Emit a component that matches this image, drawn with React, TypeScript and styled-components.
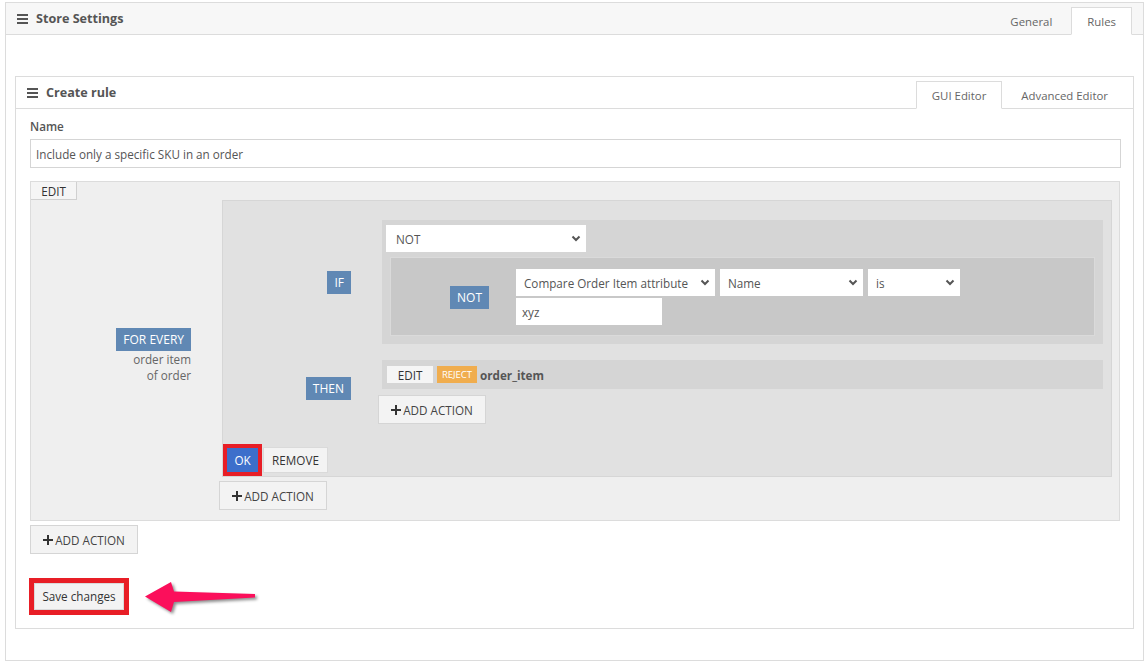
import React from "react";
import styled, { createGlobalStyle } from "styled-components";

const GlobalStyle = createGlobalStyle`
  html, body { margin: 0; padding: 0; background: #fff; }
  body {
    font-family: "Open Sans", "Noto Sans", Arial, sans-serif;
    font-size: 11.7px;
    color: #555;
  }
  * { box-sizing: border-box; }
`;

const Page = styled.div`
  width: 1148px;
  padding: 2px 4px 0 5px;
`;

const Panel = styled.section<{ $height?: number }>`
  border: 1px solid #dcdcdc;
  background: #fff;
  display: flex;
  flex-direction: column;
  ${(p) => (p.$height ? `height: ${p.$height}px; overflow: hidden;` : "")}
`;

const PanelHeader = styled.header<{ $bg: string; $right: number }>`
  flex: none;
  height: 32px;
  background: ${(p) => p.$bg};
  border-bottom: 1px solid #dcdcdc;
  display: flex;
  align-items: stretch;
  justify-content: space-between;
  padding: 0 ${(p) => p.$right}px 0 11px;
`;

const Title = styled.h2`
  margin: 0;
  display: flex;
  align-items: center;
  gap: 8px;
  font-size: 12.6px;
  font-weight: 700;
  color: #555;
`;

const Tabs = styled.nav`
  align-self: flex-end;
  display: flex;
  gap: 3px;
  margin-bottom: -1px;
`;

const Tab = styled.div<{ $active?: boolean }>`
  height: 28px;
  padding: 0 15px;
  display: flex;
  align-items: center;
  font-size: 11.4px;
  color: #666;
  border: 1px solid ${(p) => (p.$active ? "#dcdcdc" : "transparent")};
  border-bottom-color: ${(p) => (p.$active ? "#fff" : "transparent")};
  background: ${(p) => (p.$active ? "#fff" : "transparent")};
`;

const OuterBody = styled.div`
  padding: 41px 9px 0 9px;
`;

const InnerBody = styled.div`
  padding: 9px 12px 10px 14px;
  display: flex;
  flex-direction: column;
  align-items: flex-start;
`;

const FieldLabel = styled.label`
  display: block;
  font-weight: 600;
  line-height: 17px;
  margin-bottom: 4px;
  color: #555;
`;

const TextInput = styled.input<{ $width?: string }>`
  display: block;
  width: ${(p) => p.$width || "100%"};
  height: 29px;
  border: 1px solid #d5d5d5;
  padding: 0 5px;
  font: inherit;
  color: #555;
  background: #fff;
  outline: none;
`;

const RuleBox = styled.div`
  align-self: stretch;
  margin: 13px 1px 0 0;
  border: 1px solid #dcdcdc;
  background: #efefef;
  padding: 0 7px 10px 0;
`;

const CornerEdit = styled.div`
  width: 46px;
  height: 18px;
  background: #f5f5f5;
  border-right: 1px solid #d0d0d0;
  border-bottom: 1px solid #d0d0d0;
  display: flex;
  align-items: center;
  justify-content: center;
  color: #333;
`;

const LoopRow = styled.div`
  display: grid;
  grid-template-columns: 191px 1fr;
  align-items: center;
`;

const LoopLabel = styled.div`
  display: flex;
  flex-direction: column;
  align-items: flex-end;
  padding-right: 31px;
  text-align: right;
`;

const LoopText = styled.div`
  line-height: 16px;
  color: #666;
`;

const LoopContent = styled.div`
  display: flex;
  flex-direction: column;
  align-items: flex-start;
`;

const Badge = styled.span`
  display: inline-flex;
  align-items: center;
  height: 23px;
  padding: 0 7px;
  background: #6088b4;
  color: #fff;
  font-size: 12px;
  white-space: nowrap;
`;

const GroupBox = styled.div`
  align-self: stretch;
  background: #e1e1e1;
  border: 1px solid #d6d6d6;
  padding: 19px 8px 0 0;
  display: flex;
  flex-direction: column;
`;

const ClauseRow = styled.div<{ $top?: number; $align?: string }>`
  display: grid;
  grid-template-columns: 159px 1fr;
  align-items: ${(p) => p.$align || "center"};
  margin-top: ${(p) => p.$top || 0}px;
`;

const ClauseLabel = styled.div<{ $pad: number; $top?: number }>`
  display: flex;
  justify-content: flex-end;
  padding-right: ${(p) => p.$pad}px;
  margin-top: ${(p) => p.$top || 0}px;
`;

const ConditionBox = styled.div`
  background: #d5d5d5;
  padding: 5px 8px 8px 4px;
  display: flex;
  flex-direction: column;
  align-items: flex-start;
`;

const NestedBox = styled.div`
  align-self: stretch;
  margin: 5px 0 0 4px;
  border: 1px solid #dadada;
  background: #c8c8c8;
  padding: 11px 0 10px 0;
  display: grid;
  grid-template-columns: 125px 1fr;
  align-items: center;
`;

const FieldStack = styled.div`
  display: flex;
  flex-direction: column;
  gap: 2px;
`;

const FieldLine = styled.div`
  display: flex;
  gap: 5px;
`;

const SelectBox = styled.div<{ $width: number; $pad?: number }>`
  width: ${(p) => p.$width}px;
  height: 27px;
  background: #fff;
  display: flex;
  align-items: center;
  justify-content: space-between;
  padding: 0 5px 0 ${(p) => p.$pad ?? 8}px;
  color: #555;
  white-space: nowrap;
`;

const ValueBox = styled.div<{ $width: number }>`
  width: ${(p) => p.$width}px;
  height: 27px;
  background: #fff;
  display: flex;
  align-items: center;
  padding: 0 6px;
  color: #555;
`;

const ActionsColumn = styled.div`
  display: flex;
  flex-direction: column;
  align-items: flex-start;
`;

const ActionRow = styled.div`
  align-self: stretch;
  height: 29px;
  background: #d5d5d5;
  display: flex;
  align-items: center;
  padding-left: 5px;
`;

const InlineEdit = styled.span`
  width: 46px;
  height: 17px;
  background: #f5f5f5;
  color: #333;
  display: inline-flex;
  align-items: center;
  justify-content: center;
`;

const RejectTag = styled.span`
  margin-left: 4px;
  width: 40px;
  height: 17px;
  background: #f0ad4e;
  color: #fff;
  font-size: 9.5px;
  display: inline-flex;
  align-items: center;
  justify-content: center;
`;

const Target = styled.span`
  margin-left: 3px;
  font-weight: 700;
  color: #555;
`;

const AddButton = styled.button<{ $shift?: number; $top?: number }>`
  margin: ${(p) => p.$top || 0}px 0 0 ${(p) => p.$shift || 0}px;
  height: 29px;
  width: 108px;
  padding: 0;
  display: inline-flex;
  align-items: center;
  justify-content: center;
  gap: 2px;
  background: #f3f3f3;
  border: 1px solid #d5d5d5;
  border-radius: 0;
  font-family: inherit;
  font-size: 11.7px;
  color: #444;
  text-transform: uppercase;
  cursor: pointer;
`;

const GroupFooter = styled.div`
  margin-top: 20px;
  display: flex;
  align-items: center;
  gap: 1px;
`;

const Highlight = styled.div<{ $w: number }>`
  display: inline-flex;
  border: ${(p) => p.$w}px solid #e81e26;
`;

const PrimaryButton = styled.button`
  width: 31px;
  height: 24px;
  padding: 0;
  border: none;
  border-radius: 0;
  background: #3d6fcb;
  color: #fff;
  font-family: inherit;
  font-size: 11.7px;
`;

const PlainButton = styled.button<{ $w: number; $h: number }>`
  width: ${(p) => p.$w}px;
  height: ${(p) => p.$h}px;
  padding: 0;
  background: #f3f3f3;
  border: 1px solid #dadada;
  border-radius: 0;
  font-family: inherit;
  font-size: 11.7px;
  color: #333;
`;

const SaveRow = styled.div`
  margin: 20px 0 0 -1px;
  display: flex;
  align-items: center;
  gap: 10px;
`;

const Hamburger = () => (
  <svg width="11" height="10" viewBox="0 0 11 10" fill="#555" aria-hidden>
    <rect x="0" y="0" width="11" height="2" />
    <rect x="0" y="4" width="11" height="2" />
    <rect x="0" y="8" width="11" height="2" />
  </svg>
);

const Chevron = () => (
  <svg width="10" height="7" viewBox="0 0 10 7" aria-hidden>
    <polyline points="1.5,1.5 5,5 8.5,1.5" fill="none" stroke="#555" strokeWidth="2" />
  </svg>
);

const Plus = () => (
  <svg width="10" height="10" viewBox="0 0 10 10" aria-hidden>
    <rect x="4" y="0" width="2" height="10" fill="#333" />
    <rect x="0" y="4" width="10" height="2" fill="#333" />
  </svg>
);

const Arrow = () => (
  <svg
    width="122"
    height="44"
    viewBox="0 0 122 44"
    aria-hidden
    style={{ filter: "drop-shadow(2px 2px 1.5px rgba(0,0,0,0.45))" }}
  >
    <polygon points="6,22.5 32,8 35,17.5 116,20 116,23.5 35,28 32,38" fill="#fb0f5b" />
  </svg>
);

const Select = ({ value, width, pad }: { value: string; width: number; pad?: number }) => (
  <SelectBox $width={width} $pad={pad}>
    <span>{value}</span>
    <Chevron />
  </SelectBox>
);

const AddAction = ({ shift, top }: { shift?: number; top?: number }) => (
  <AddButton $shift={shift} $top={top}>
    <Plus />
    <span>Add action</span>
  </AddButton>
);

export default function App() {
  return (
    <>
      <GlobalStyle />
      <Page>
        <Panel $height={659}>
          <PanelHeader $bg="#f7f7f7" $right={11}>
            <Title>
              <Hamburger />
              Store Settings
            </Title>
            <Tabs>
              <Tab>General</Tab>
              <Tab $active>Rules</Tab>
            </Tabs>
          </PanelHeader>
          <OuterBody>
            <Panel>
              <PanelHeader $bg="#fff" $right={9}>
                <Title>
                  <Hamburger />
                  Create rule
                </Title>
                <Tabs>
                  <Tab $active>GUI Editor</Tab>
                  <Tab>Advanced Editor</Tab>
                </Tabs>
              </PanelHeader>
              <InnerBody>
                <FieldLabel>Name</FieldLabel>
                <TextInput readOnly value="Include only a specific SKU in an order" />
                <RuleBox>
                  <CornerEdit>EDIT</CornerEdit>
                  <LoopRow>
                    <LoopLabel>
                      <Badge>FOR EVERY</Badge>
                      <LoopText>order item</LoopText>
                      <LoopText>of order</LoopText>
                    </LoopLabel>
                    <LoopContent>
                      <GroupBox>
                        <ClauseRow>
                          <ClauseLabel $pad={31}>
                            <Badge>IF</Badge>
                          </ClauseLabel>
                          <ConditionBox>
                            <Select value="NOT" width={200} pad={10} />
                            <NestedBox>
                              <ClauseLabel $pad={27}>
                                <Badge>NOT</Badge>
                              </ClauseLabel>
                              <FieldStack>
                                <FieldLine>
                                  <Select value="Compare Order Item attribute" width={199} />
                                  <Select value="Name" width={143} />
                                  <Select value="is" width={92} />
                                </FieldLine>
                                <ValueBox $width={146}>xyz</ValueBox>
                              </FieldStack>
                            </NestedBox>
                          </ConditionBox>
                        </ClauseRow>
                        <ClauseRow $top={16} $align="start">
                          <ClauseLabel $pad={31} $top={17}>
                            <Badge>THEN</Badge>
                          </ClauseLabel>
                          <ActionsColumn>
                            <ActionRow>
                              <InlineEdit>EDIT</InlineEdit>
                              <RejectTag>REJECT</RejectTag>
                              <Target>order_item</Target>
                            </ActionRow>
                            <AddAction shift={-4} top={6} />
                          </ActionsColumn>
                        </ClauseRow>
                        <GroupFooter>
                          <Highlight $w={4}>
                            <PrimaryButton>OK</PrimaryButton>
                          </Highlight>
                          <PlainButton $w={65} $h={26}>REMOVE</PlainButton>
                        </GroupFooter>
                      </GroupBox>
                      <AddAction shift={-3} top={4} />
                    </LoopContent>
                  </LoopRow>
                </RuleBox>
                <AddAction top={4} />
                <SaveRow>
                  <Highlight $w={5}>
                    <PlainButton $w={90} $h={27}>Save changes</PlainButton>
                  </Highlight>
                  <Arrow />
                </SaveRow>
              </InnerBody>
            </Panel>
          </OuterBody>
        </Panel>
      </Page>
    </>
  );
}
